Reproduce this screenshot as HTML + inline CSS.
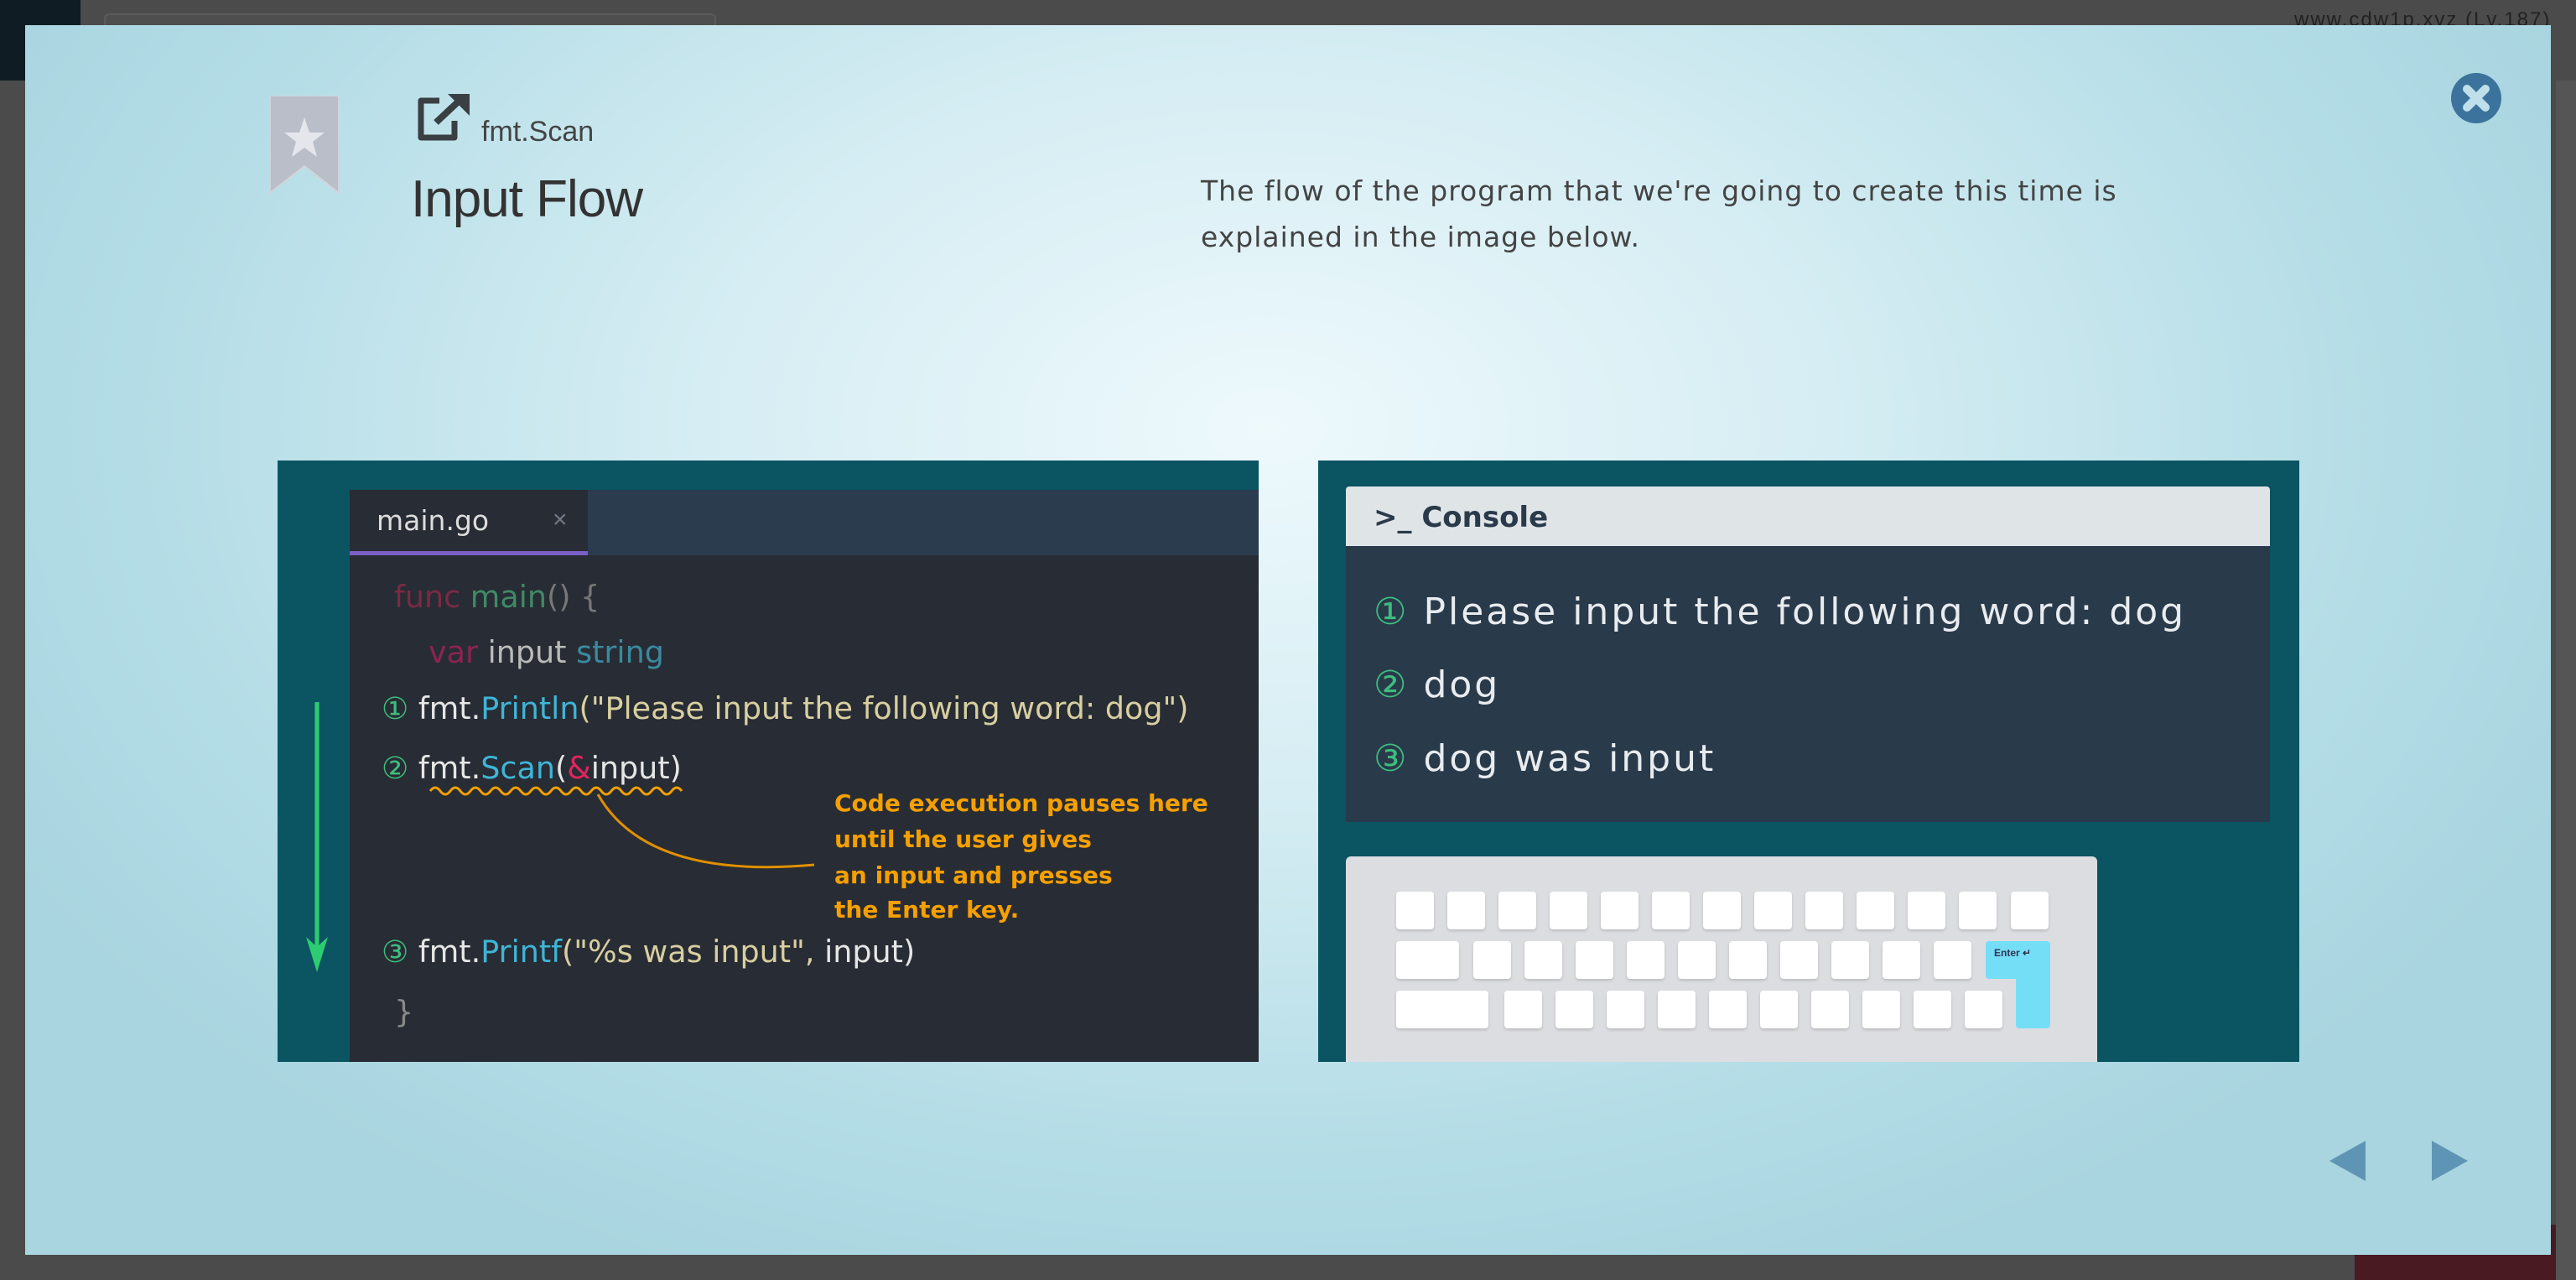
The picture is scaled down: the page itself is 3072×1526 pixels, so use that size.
<!DOCTYPE html>
<html><head><meta charset="utf-8"><style>
*{margin:0;padding:0;box-sizing:border-box}
body{width:3072px;height:1526px;overflow:hidden;background:#4b4b4b;position:relative;font-family:"Liberation Sans",sans-serif}
.a{position:absolute}
#modal{left:30px;top:30px;width:3012px;height:1466px;background:radial-gradient(ellipse 1700px 1100px at 1480px 480px,#eef9fc 0%,#d5edf3 40%,#b3dce6 80%,#a9d5e0 100%);overflow:hidden}
.code{font-family:"DejaVu Sans",sans-serif;font-size:36.5px;white-space:nowrap;letter-spacing:0px}
.num{color:#3dbd7d;font-size:36px}
.ann{color:#f5a000;font-weight:bold;font-size:28px;font-family:"DejaVu Sans",sans-serif;white-space:nowrap}
.key{position:absolute;background:#fff;border-radius:4px;box-shadow:0 2px 3px rgba(0,0,0,.15);height:45px}
.con{font-family:"DejaVu Sans",sans-serif;font-size:44px;color:#e8ecef;letter-spacing:3px;white-space:nowrap}
</style></head><body>
<div class="a" style="left:0;top:0;width:96px;height:96px;background:#0f1c24"></div>
<div class="a" style="left:124px;top:16px;width:730px;height:30px;border:2px solid #5a5a5a;border-radius:6px;background:#4e4e4e"></div>
<div class="a" style="left:2736px;top:10px;font-size:24px;color:#222;letter-spacing:2px">www.cdw1p.xyz (Lv.187)</div>
<div class="a" style="left:2808px;top:1460px;width:240px;height:66px;background:#4a1a22"></div>
<div class="a" style="left:3048px;top:96px;width:24px;height:1430px;background:#555"></div>

<div id="modal" class="a">
  <svg class="a" style="left:290px;top:84px" width="86" height="118" viewBox="0 0 86 118">
    <path d="M2 0H84V116L43 84L2 116Z" fill="#b9bec8" stroke="#d0d4da" stroke-width="2"/>
    <path d="M43 26L49 44H67L53 55L58 73L43 62L28 73L33 55L19 44H37Z" fill="#e4e6ec"/>
  </svg>
  <svg class="a" style="left:464px;top:80px" width="70" height="60" viewBox="0 0 70 60">
    <path d="M30 10H8V54H48V34" fill="none" stroke="#3a3f44" stroke-width="7" stroke-linejoin="round"/>
    <path d="M26 36L58 6" stroke="#3a3f44" stroke-width="8"/>
    <path d="M40 2H66V28Z" fill="#3a3f44"/>
  </svg>
  <div class="a" style="left:544px;top:108px;font-size:34px;color:#444;font-weight:300">fmt.Scan</div>
  <div class="a" style="left:460px;top:172px;font-size:62px;color:#333;font-weight:300;letter-spacing:-1px">Input Flow</div>
  <div class="a" style="left:1402px;top:170px;font-size:33px;color:#444;line-height:55px;width:1300px;font-family:'DejaVu Sans',sans-serif;letter-spacing:1px">The flow of the program that we're going to create this time is<br>explained in the image below.</div>
  <svg class="a" style="left:2892px;top:56px" width="62" height="62" viewBox="0 0 62 62">
    <circle cx="31" cy="31" r="30" fill="#3b739c"/>
    <path d="M20 20L42 42M42 20L20 42" stroke="#bfe0ea" stroke-width="10" stroke-linecap="round"/>
  </svg>
  <svg class="a" style="left:2748px;top:1330px" width="44" height="48"><path d="M0 24L43 0V48Z" fill="#5f95b4"/></svg>
  <svg class="a" style="left:2870px;top:1330px" width="44" height="48"><path d="M0 0L43 24L0 48Z" fill="#5f95b4"/></svg>

  <div class="a" style="left:301px;top:519px;width:1170px;height:717px;background:#0b5462;overflow:hidden">
    <div class="a" style="left:86px;top:35px;width:1084px;height:78px;background:#2b3c4e"></div>
    <div class="a" style="left:86px;top:35px;width:284px;height:78px;background:#282c34;border-bottom:5px solid #7a5fc4"></div>
    <div class="a" style="left:118px;top:52px;font-size:33px;color:#ddd;font-family:'DejaVu Sans',sans-serif">main.go</div>
    <div class="a" style="left:328px;top:54px;font-size:30px;color:#778">×</div>
    <div class="a" style="left:86px;top:113px;width:1084px;height:604px;background:#282c34"></div>
    <div class="a code" style="left:139px;top:141px"><span style="color:#7a2a45">func</span> <span style="color:#3f8a66">main</span><span style="color:#777">() {</span></div>
    <div class="a code" style="left:180px;top:207px"><span style="color:#8b2450">var</span> <span style="color:#bbb">input</span> <span style="color:#3a8aa0">string</span></div>
    <div class="a code" style="left:124px;top:274px"><span class="num">①</span> <span style="color:#e6e6e6">fmt.</span><span style="color:#3fb5d6">Println</span><span style="color:#d8cfa0">("Please input the following word: dog")</span></div>
    <div class="a code" style="left:124px;top:345px"><span class="num">②</span> <span style="color:#e6e6e6">fmt.</span><span style="color:#3fb5d6">Scan</span><span style="color:#e6e6e6">(</span><span style="color:#e0245e">&amp;</span><span style="color:#e6e6e6">input)</span></div>
    <div class="a code" style="left:124px;top:564px"><span class="num">③</span> <span style="color:#e6e6e6">fmt.</span><span style="color:#3fb5d6">Printf</span><span style="color:#d8cfa0">("%s was input", </span><span style="color:#e6e6e6">input)</span></div>
    <div class="a code" style="left:139px;top:636px;color:#888">}</div>
    <svg class="a" style="left:0;top:0" width="1170" height="717">
      <path d="M182 394 q6 -8 12 0 t12 0 t12 0 t12 0 t12 0 t12 0 t12 0 t12 0 t12 0 t12 0 t12 0 t12 0 t12 0 t12 0 t12 0 t12 0 t12 0 t12 0 t12 0 t12 0 t12 0 t12 0 t12 0 t12 0 t12 0" fill="none" stroke="#f0a000" stroke-width="3"/>
      <path d="M382 398 Q440 500 640 482" fill="none" stroke="#e09000" stroke-width="3"/>
      <line x1="47" y1="288" x2="47" y2="580" stroke="#2ecc71" stroke-width="5"/>
      <path d="M34 568L47 610L60 568L47 580Z" fill="#2ecc71"/>
    </svg>
    <div class="a ann" style="left:664px;top:392px">Code execution pauses here</div>
    <div class="a ann" style="left:664px;top:435px">until the user gives</div>
    <div class="a ann" style="left:664px;top:478px">an input and presses</div>
    <div class="a ann" style="left:664px;top:519px">the Enter key.</div>
  </div>

  <div class="a" style="left:1542px;top:519px;width:1170px;height:717px;background:#0b5462;overflow:hidden">
    <div class="a" style="left:33px;top:31px;width:1102px;height:71px;background:#dfe4e7;border-radius:4px 4px 0 0"></div>
    <div class="a" style="left:66px;top:48px;font-size:34px;color:#2a3a4a;font-weight:bold;font-family:'DejaVu Sans',sans-serif">&gt;_ Console</div>
    <div class="a" style="left:33px;top:102px;width:1102px;height:329px;background:#293a4b"></div>
    <div class="a con" style="left:66px;top:155px"><span style="color:#3dbd7d">①</span> Please input the following word: dog</div>
    <div class="a con" style="left:66px;top:242px"><span style="color:#3dbd7d">②</span> dog</div>
    <div class="a con" style="left:66px;top:330px"><span style="color:#3dbd7d">③</span> dog was input</div>
    <div class="a" style="left:33px;top:472px;width:896px;height:260px;background:#dcdde1;border-radius:6px"></div>
    <div class="key" style="left:93px;top:514px;width:45px"></div><div class="key" style="left:154px;top:514px;width:45px"></div><div class="key" style="left:215px;top:514px;width:45px"></div><div class="key" style="left:276px;top:514px;width:45px"></div><div class="key" style="left:337px;top:514px;width:45px"></div><div class="key" style="left:398px;top:514px;width:45px"></div><div class="key" style="left:459px;top:514px;width:45px"></div><div class="key" style="left:520px;top:514px;width:45px"></div><div class="key" style="left:581px;top:514px;width:45px"></div><div class="key" style="left:642px;top:514px;width:45px"></div><div class="key" style="left:703px;top:514px;width:45px"></div><div class="key" style="left:764px;top:514px;width:45px"></div><div class="key" style="left:826px;top:514px;width:45px"></div>
    <div class="key" style="left:93px;top:573px;width:75px"></div><div class="key" style="left:185px;top:573px;width:45px"></div><div class="key" style="left:246px;top:573px;width:45px"></div><div class="key" style="left:307px;top:573px;width:45px"></div><div class="key" style="left:368px;top:573px;width:45px"></div><div class="key" style="left:429px;top:573px;width:45px"></div><div class="key" style="left:490px;top:573px;width:45px"></div><div class="key" style="left:551px;top:573px;width:45px"></div><div class="key" style="left:612px;top:573px;width:45px"></div><div class="key" style="left:673px;top:573px;width:45px"></div><div class="key" style="left:734px;top:573px;width:45px"></div>
    <div class="a" style="left:796px;top:573px;width:77px;height:45px;background:#75def7;border-radius:4px 4px 0 4px"></div>
    <div class="a" style="left:832px;top:610px;width:41px;height:67px;background:#75def7;border-radius:0 0 4px 4px"></div>
    <div class="a" style="left:806px;top:580px;font-size:12px;color:#335;font-weight:bold">Enter ↵</div>
    <div class="key" style="left:93px;top:632px;width:110px"></div><div class="key" style="left:222px;top:632px;width:45px"></div><div class="key" style="left:283px;top:632px;width:45px"></div><div class="key" style="left:344px;top:632px;width:45px"></div><div class="key" style="left:405px;top:632px;width:45px"></div><div class="key" style="left:466px;top:632px;width:45px"></div><div class="key" style="left:527px;top:632px;width:45px"></div><div class="key" style="left:588px;top:632px;width:45px"></div><div class="key" style="left:649px;top:632px;width:45px"></div><div class="key" style="left:710px;top:632px;width:45px"></div><div class="key" style="left:771px;top:632px;width:45px"></div>
  </div>
</div>
</body></html>
